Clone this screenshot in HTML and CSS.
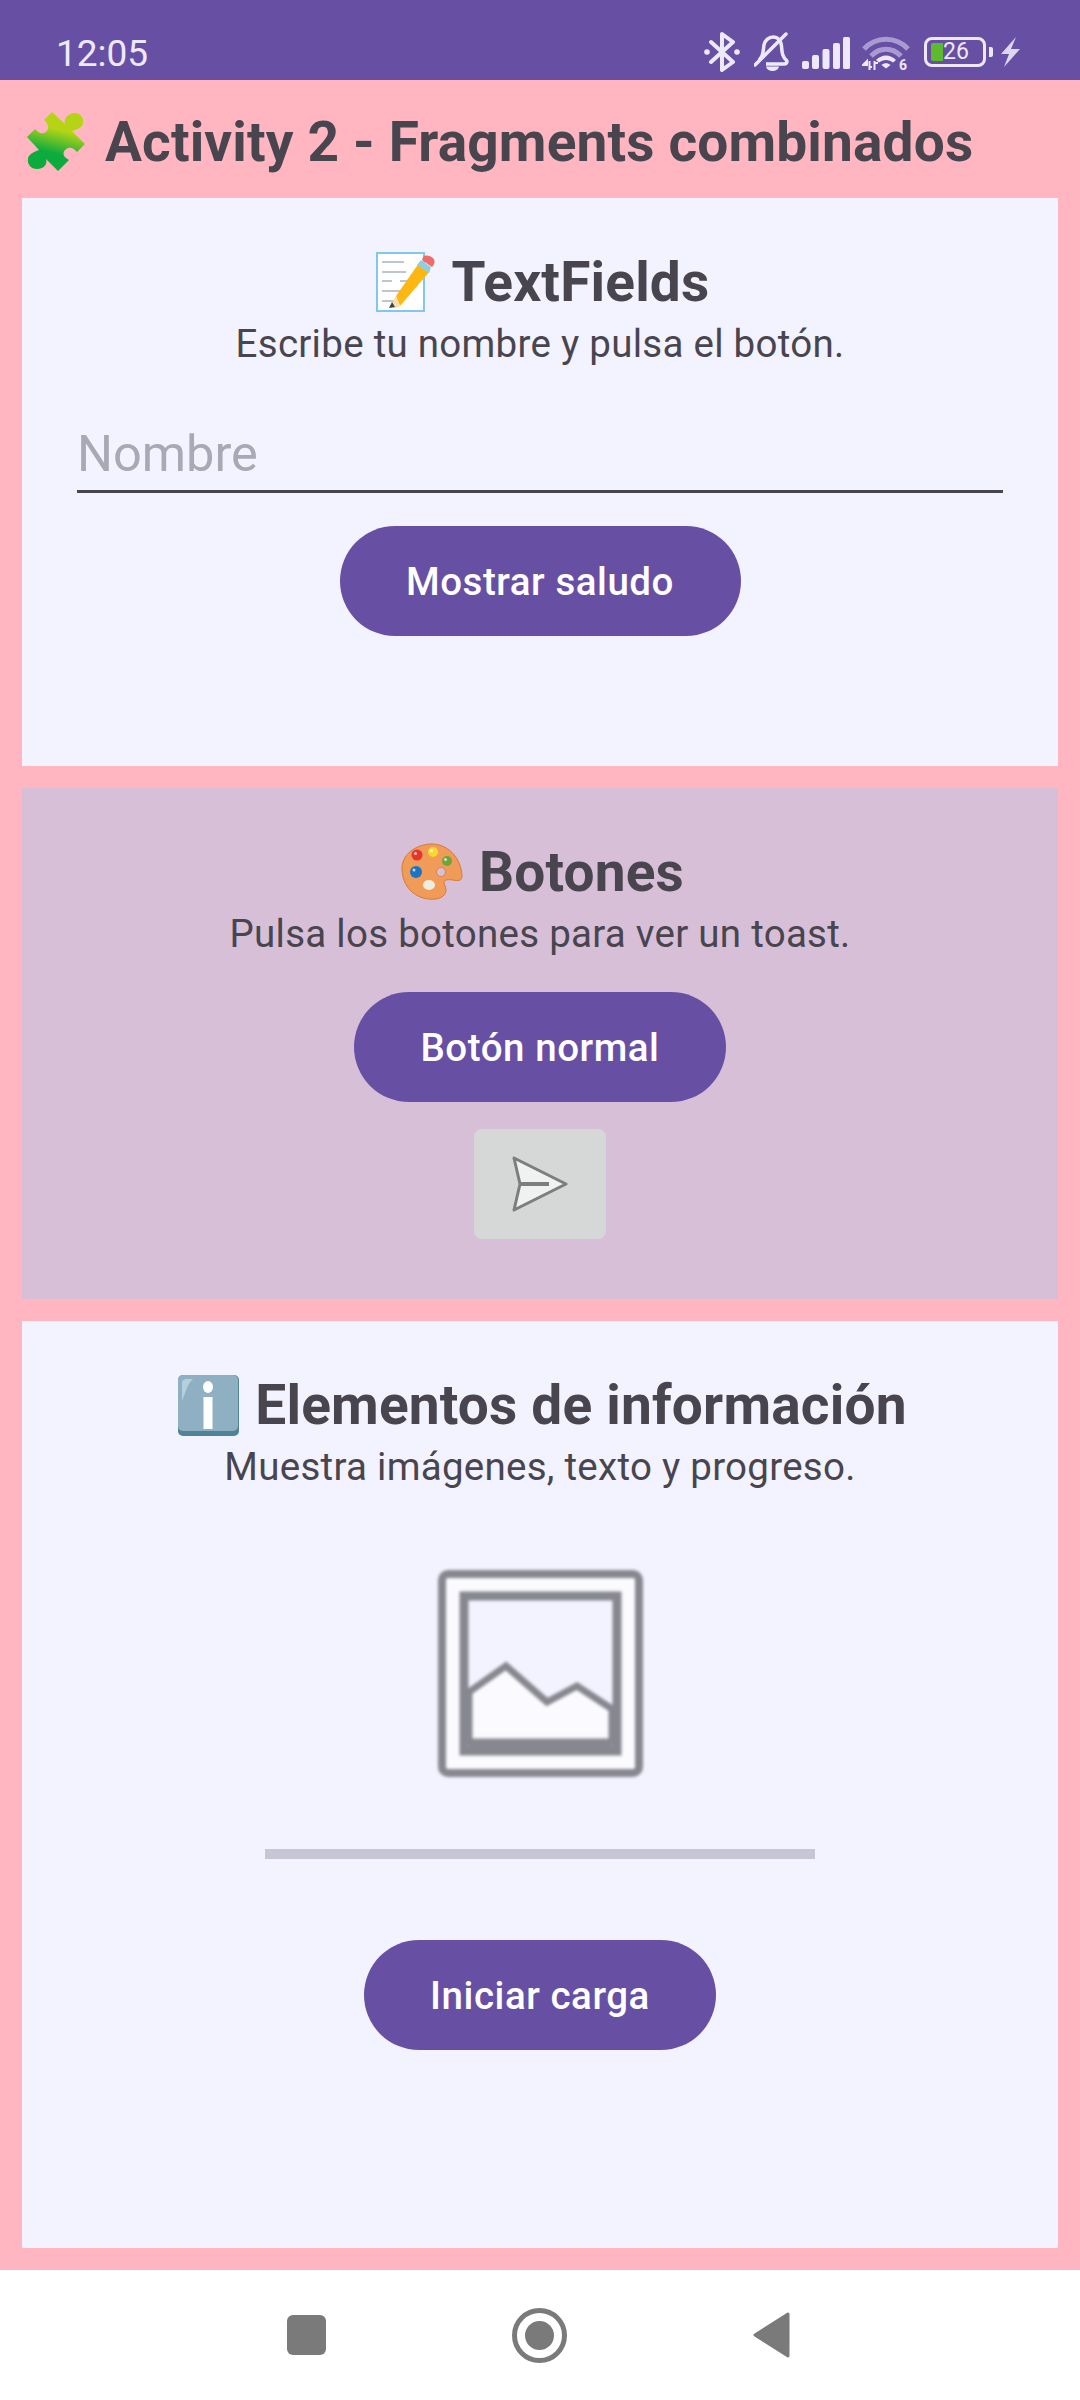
FILE: index.html
```html
<!doctype html>
<html>
<head>
  <meta charset="utf-8">
  <title>Activity 2</title>
  <link rel="stylesheet" href="styles.css">
</head>
<body>
  <div class="status-bar">
    <span class="clock">12:05</span>
    <div class="status-icons">
      <svg class="ic-bt" viewBox="0 0 36 40"><path d="M7 10 L29 30 L18 38 V2 L29 10 L7 30" fill="none" stroke="#eee9fa" stroke-width="4" stroke-linejoin="round" stroke-linecap="round"/><circle cx="3" cy="20" r="2.8" fill="#eee9fa"/><circle cx="33" cy="20" r="2.8" fill="#eee9fa"/></svg>
      <svg class="ic-bell" viewBox="0 0 36 40"><path d="M5 28 C10 24 9 18 10 13 C11 8 15 5 19 5 C24 5 27 9 27.500 14 C28 20 28 25 33 29 C33 31 32 32 30 32 H12" fill="none" stroke="#eee9fa" stroke-width="3.500" stroke-linejoin="round"/><path d="M1 33 L32 2" stroke="#eee9fa" stroke-width="3.500" stroke-linecap="round"/><path d="M12 34.500 H25 C24 38 21 39 18.500 39 C16 39 13 38 12 34.500 Z" fill="#eee9fa"/></svg>
      <svg class="ic-signal" viewBox="0 0 48 32"><g fill="#eee9fa"><rect x="0" y="24" width="7" height="8" rx="2"/><rect x="10" y="18" width="7" height="14" rx="2"/><rect x="20.500" y="12" width="7" height="20" rx="2"/><rect x="31" y="6" width="7" height="26" rx="2"/><rect x="41" y="0" width="7" height="32" rx="1.500"/></g></svg>
      <svg class="ic-wifi" viewBox="0 0 48 44"><path d="M2 14 C14 1 34 1 46 14" fill="none" stroke="#a99bd2" stroke-width="5"/><path d="M9 21 C18 12 30 12 39 21" fill="none" stroke="#a99bd2" stroke-width="5"/><path d="M14 25 C20 19 28 19 34 25 L31 27.500 C27 24 21 24 17 27.500 Z" fill="#eee9fa"/><path d="M19.500 30 C22 27.500 26 27.500 28.500 30 L24 33.500 Z" fill="#eee9fa"/><path d="M1 30 H5 V26 Z M7.500 26 V35 M7.500 32 H10 M12.500 26 V35 M12.500 28 H16" fill="#eee9fa" stroke="#eee9fa" stroke-width="2"/><text class="wifi-six" x="41" y="35">6</text></svg>
      <div class="battery">
        <div class="battery-body"><span class="battery-fill"></span><span class="battery-num">26</span></div>
        <span class="battery-tip"></span>
      </div>
      <svg class="ic-bolt" viewBox="0 0 20 30"><path d="M16 0 L1 17 H9 L4 30 L20 12 H11 Z" fill="#dcd6ef"/></svg>
    </div>
  </div>

  <div class="content">
    <h1 class="app-title">
      <svg class="emoji-puzzle" viewBox="0 0 60 60">
        <defs><linearGradient id="pz" x1="0.6" y1="0.1" x2="0.4" y2="0.9"><stop offset="0.25" stop-color="#b5d416"/><stop offset="0.75" stop-color="#0cab3e"/></linearGradient></defs>
        <path d="M25 0 L38 12 C36 6 42 1 48 1 C54 1 57 7 56 11 C55 16 49 18 45 19 L58 32 L50 40 C47 37 45 35 41 36 C36 38 35 43 39 46 L42 48 L31 59 L19 47 C21 53 16 57 10 57 C4 57 0 52 1 47 C1 43 6 40 12 38 L0 25 L8 17 C11 20 13 22 17 21 C22 19 22 14 19 10 L17 8 Z" fill="url(#pz)"/>
      </svg>
      <span>Activity 2 - Fragments combinados</span>
    </h1>

    <section class="card card-text">
      <h2 class="card-title">
        <svg class="emoji-memo" viewBox="0 0 60 60">
          <rect x="1" y="1" width="47" height="58" fill="#fff" stroke="#82c8ee" stroke-width="2"/>
          <path d="M6 10 H28 M6 20 H30 M6 29 H16 M24 29 H34 M6 39 H24 M6 49 H20" stroke="#aab4bb" stroke-width="1.500" fill="none"/>
          <path d="M43 11 L54 19 L24 54 L20 44 Z" fill="#fcb713"/>
          <path d="M20 44 L24 54 L20 56 L13 56 Z" fill="#f6dfa8"/>
          <path d="M13 56 L16 50 L19 55 Z" fill="#444"/>
          <path d="M45 8 L55 15 L53 21 L41 13 Z" fill="#8ecfde"/>
          <path d="M47 5 C50 2 54 4 57 6 C60 9 58 13 56 15 L46 8 Z" fill="#ee6b6b"/>
        </svg>
        <span>TextFields</span>
      </h2>
      <p class="card-sub">Escribe tu nombre y pulsa el botón.</p>
      <div class="field"><span class="placeholder">Nombre</span></div>
      <button class="pill btn-greet">Mostrar saludo</button>
    </section>

    <section class="card card-buttons">
      <h2 class="card-title">
        <svg class="emoji-palette" viewBox="0 0 62 58">
          <path d="M29 1 C46 0 60 14 61 33 C61 38 57 38 52 37 C45 36 41 37 44 43 C47 49 43 55 35 56 C18 58 2 47 1 27 C0 12 14 2 29 1 Z" fill="#f09b57" stroke="#d77a32" stroke-width="1"/>
          <circle cx="16" cy="12" r="5.500" fill="#e5352c"/><circle cx="32" cy="9" r="5" fill="#f6d92d"/>
          <circle cx="46" cy="18" r="5" fill="#6ca53a"/><circle cx="15" cy="29" r="6" fill="#1a74c4"/>
          <circle cx="40" cy="29" r="4.500" fill="#d6bfd8" stroke="#d77a32" stroke-width="0.800"/><ellipse cx="28" cy="42" rx="6" ry="5" fill="#f1ece0"/>
          <g fill="#fff" opacity="0.7"><circle cx="14.500" cy="10.500" r="1.500"/><circle cx="30.500" cy="7.500" r="1.500"/><circle cx="44.500" cy="16.500" r="1.500"/><circle cx="13" cy="27" r="1.500"/></g>
        </svg>
        <span>Botones</span>
      </h2>
      <p class="card-sub">Pulsa los botones para ver un toast.</p>
      <button class="pill btn-normal">Botón normal</button>
      <button class="img-btn">
        <svg class="ic-send" viewBox="0 0 58 56"><path d="M3 2 L55 28 L3 54 L9 28 Z" fill="#f0f1f1" stroke="#7d7d7d" stroke-width="3" stroke-linejoin="round"/><path d="M9 28 H38" stroke="#7d7d7d" stroke-width="4"/></svg>
      </button>
    </section>

    <section class="card card-info">
      <h2 class="card-title">
        <svg class="emoji-info" viewBox="0 0 61 61">
          <rect x="0" y="0" width="61" height="61" rx="5" fill="#4f8397"/>
          <rect x="0" y="0" width="60" height="56" rx="5" fill="#8fb0c2"/>
          <path d="M4 26 V8 C4 5 6 4 9 4 H15 C10 8 8 16 4 26 Z" fill="#b3d0dc"/>
          <ellipse cx="30" cy="12" rx="5" ry="6" fill="#fff"/><rect x="25.500" y="22" width="9" height="32" fill="#fff"/>
        </svg>
        <span>Elementos de información</span>
      </h2>
      <p class="card-sub">Muestra imágenes, texto y progreso.</p>
      <svg class="placeholder-img" viewBox="0 0 205 207">
        <rect x="4" y="4" width="197" height="199" rx="6" fill="#fbfaff" stroke="#87878f" stroke-width="8"/>
        <rect x="26" y="26" width="153" height="155" fill="#f3f3ff" stroke="#87878f" stroke-width="9"/>
        <path d="M31 122 L68 96 L109 132 L139 116 L174 139 V172 H31 Z" fill="#fbfaff" stroke="#87878f" stroke-width="7"/>
        <path d="M31 172 H174 V177 H31 Z" fill="#87878f"/>
      </svg>
      <div class="progress"></div>
      <button class="pill btn-load">Iniciar carga</button>
    </section>
  </div>

  <div class="nav-bar">
    <span class="nav-square"></span>
    <span class="nav-home"><span class="nav-home-dot"></span></span>
    <svg class="nav-back" viewBox="0 0 38 46"><path d="M35 2 L2 23 L35 44 Z" fill="#7a7a7a" stroke="#7a7a7a" stroke-width="3" stroke-linejoin="round"/></svg>
  </div>
</body>
</html>
```

FILE: styles.css
```css
* {
  box-sizing: border-box;
}
body {
  margin: 0;
  width: 1080px;
  height: 2400px;
  display: flex;
  flex-direction: column;
  background: #fff;
  color: #49454f;
  font-family: Roboto, sans-serif;
  overflow: hidden;
}

/* status bar */
.status-bar {
  height: 80px;
  background: #6750a4;
  display: flex;
  justify-content: space-between;
  padding: 26px 60px 0 56px;
  color: #eee9fa;
}
.clock {
  font-size: 37px;
  line-height: 56px;
  height: 54px;
}
.status-icons {
  display: flex;
  align-items: flex-start;
}
.status-icons svg {
  display: block;
}
.ic-bt { width: 36px; height: 40px; margin-top: 6px; }
.ic-bell { width: 36px; height: 40px; margin: 6px 0 0 14px; }
.ic-signal { width: 48px; height: 32px; margin: 11px 0 0 12px; }
.ic-wifi { width: 48px; height: 44px; margin: 9px 0 0 12px; }
.wifi-six {
  font: 700 14px Roboto, sans-serif;
  fill: #eee9fa;
  text-anchor: middle;
}
.battery {
  display: flex;
  align-items: center;
  margin: 11px 0 0 14px;
}
.battery-body {
  width: 62px;
  height: 30px;
  border: 3px solid #eee9fa;
  border-radius: 8px;
  display: flex;
  align-items: center;
  padding-left: 4px;
}
.battery-fill {
  width: 12px;
  height: 18px;
  background: #5dba2f;
  border-radius: 2px 0 0 2px;
}
.battery-num {
  font-size: 23px;
  line-height: 24px;
}
.battery-tip {
  width: 4px;
  height: 10px;
  margin-left: 3px;
  background: #eee9fa;
  border-radius: 0 2px 2px 0;
}
.ic-bolt { width: 20px; height: 30px; margin: 11px 0 0 7px; }

/* content */
.content {
  height: 2190px;
  background: #ffb6c1;
  padding: 0 22px;
}
.app-title {
  height: 118px;
  margin: 0;
  display: flex;
  align-items: center;
  gap: 18px;
  padding: 6px 0 0 5px;
  font-size: 55px;
  font-weight: 700;
  letter-spacing: 0.15px;
  white-space: nowrap;
}
.emoji-puzzle { width: 60px; height: 60px; }

.card {
  display: flex;
  flex-direction: column;
  align-items: center;
  background: #f3f3ff;
  padding-top: 51px;
  margin-bottom: 22px;
}
.card-text { height: 568px; }
.card-buttons { height: 511px; background: #d7bfd8; }
.card-info { height: 927px; }

.card-title {
  margin: 0;
  display: flex;
  align-items: center;
  gap: 16px;
  height: 66px;
  padding-left: 5px;
  font-size: 55px;
  font-weight: 700;
  letter-spacing: 0.18px;
  white-space: nowrap;
}
.emoji-memo { width: 60px; height: 60px; }
.emoji-palette { width: 62px; height: 58px; }
.emoji-info { width: 61px; height: 61px; }

.card-sub {
  margin: 4px 0 0;
  font-size: 38.5px;
  line-height: 50px;
  letter-spacing: 0.27px;
}

.field {
  width: 926px;
  height: 124px;
  border-bottom: 3px solid #49454f;
  display: flex;
  align-items: flex-end;
  padding-bottom: 7px;
}
.placeholder {
  font-size: 50.5px;
  color: #a9a8b5;
}

.pill {
  display: block;
  height: 110px;
  border: none;
  border-radius: 55px;
  background: #6750a4;
  color: #fff;
  font-family: Roboto, sans-serif;
  font-size: 38.5px;
  font-weight: 500;
  letter-spacing: 0.55px;
  padding: 1px 0 0;
}
.btn-greet { width: 401px; margin-top: 33px; }
.btn-normal { width: 372px; margin-top: 33px; }
.btn-load { width: 352px; margin-top: 81px; }

.img-btn {
  width: 132px;
  height: 110px;
  margin-top: 27px;
  border: none;
  border-radius: 8px;
  background: #d5d8d7;
  display: flex;
  align-items: center;
  justify-content: center;
  padding: 0;
}
.ic-send { width: 58px; height: 56px; }

.placeholder-img {
  width: 205px;
  height: 207px;
  margin-top: 78px;
  filter: blur(1.5px);
}
.progress {
  width: 550px;
  height: 10px;
  margin-top: 72px;
  background: #c8c6d6;
}

/* nav bar */
.nav-bar {
  height: 130px;
  background: #fff;
  display: flex;
  align-items: center;
  padding-left: 287px;
}
.nav-square {
  width: 39px;
  height: 40px;
  background: #7a7a7a;
  border-radius: 6px;
}
.nav-home {
  width: 55px;
  height: 55px;
  margin-left: 186px;
  border: 5px solid #7a7a7a;
  border-radius: 50%;
  display: flex;
  align-items: center;
  justify-content: center;
}
.nav-home-dot {
  width: 29px;
  height: 29px;
  background: #7a7a7a;
  border-radius: 50%;
}
.nav-back {
  width: 38px;
  height: 46px;
  margin-left: 186px;
}
```
